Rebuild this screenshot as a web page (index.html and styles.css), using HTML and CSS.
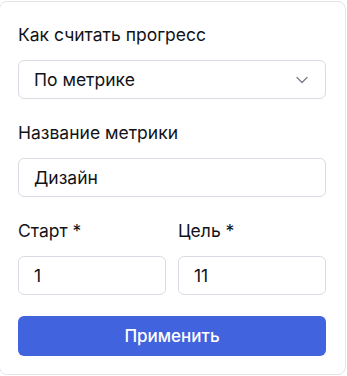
FILE: index.html
```html
<!DOCTYPE html>
<html lang="ru">
<head>
<meta charset="utf-8">
<link rel="stylesheet" href="styles.css">
</head>
<body>
<div class="card">
  <div class="field">
    <div class="label">Как считать прогресс</div>
    <div class="control select">
      <span>По метрике</span>
      <svg class="chev" width="12" height="8" viewBox="0 0 12 8"><path d="M1 1.5 L6 6.5 L11 1.5" fill="none" stroke="#7b8190" stroke-width="1.4" stroke-linecap="round" stroke-linejoin="round"/></svg>
    </div>
  </div>
  <div class="field">
    <div class="label">Название метрики</div>
    <div class="control">Дизайн</div>
  </div>
  <div class="row">
    <div class="field">
      <div class="label">Старт *</div>
      <div class="control">1</div>
    </div>
    <div class="field">
      <div class="label">Цель *</div>
      <div class="control">11</div>
    </div>
  </div>
  <button class="btn">Применить</button>
</div>
</body>
</html>
```

FILE: styles.css
```css
html, body {
  margin: 0;
  padding: 0;
  background: #ffffff;
}
body {
  font-family: Inter, "Noto Sans", sans-serif;
  color: #111318;
}
.card {
  box-sizing: border-box;
  width: 347px;
  height: 374px;
  margin: 1px 0 0 -1px;
  border: 1px solid #e3e5ea;
  border-radius: 8px;
  background: #fff;
  padding: 23px 19px 0 18px;
  display: flex;
  flex-direction: column;
}
.field {
  display: flex;
  flex-direction: column;
  margin-bottom: 24px;
}
.row .field { margin-bottom: 0; }
.label {
  font-size: 17.5px;
  line-height: 20px;
  margin-bottom: 15px;
}
.control {
  box-sizing: border-box;
  height: 39px;
  border: 1px solid #d9dce3;
  border-radius: 6px;
  padding: 0 15px;
  display: flex;
  align-items: center;
  font-size: 17.5px;
}
.select {
  justify-content: space-between;
  padding-right: 17px;
}
.chev { margin-top: 1px; }
.row {
  display: grid;
  grid-template-columns: 1fr 1fr;
  gap: 12px;
}
.btn {
  margin-top: 21px;
  height: 40px;
  border: none;
  border-radius: 6px;
  background: #4263de;
  color: #fff;
  font-family: Inter, sans-serif;
  font-size: 17px;
  font-weight: 500;
}
```
